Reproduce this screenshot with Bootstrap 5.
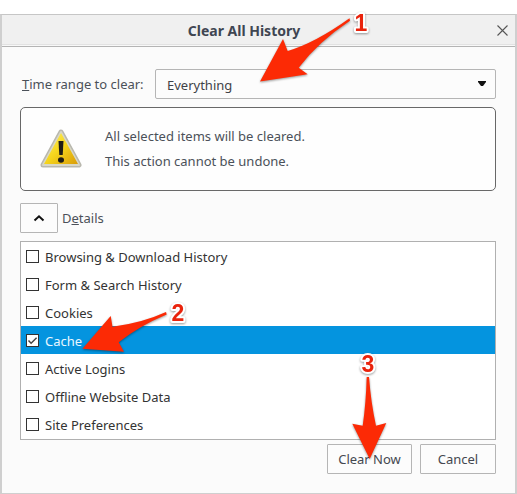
<!DOCTYPE html>
<html lang="en">
<head>
<meta charset="utf-8">
<meta name="viewport" content="width=device-width, initial-scale=1">
<title>Clear All History</title>
<link href="https://cdn.jsdelivr.net/npm/bootstrap@5.3.0/dist/css/bootstrap.min.css" rel="stylesheet">
<style>
body { font-family: "Noto Sans", sans-serif; font-size: 13px; line-height: 20px; color: #4b5159; background: #fff; }
.window { margin-top: 14px; background: #fbfbfb; border: 1px solid #c6c6c6; border-left: 2px solid #cfcfcf; border-right: 2px solid #cfcfcf; border-bottom: 2px solid #cfcfcf; }
.titlebar { height: 32px; padding-right: 29px; background: #f0f0f0; border-bottom: 1px solid #b4b4b4; box-shadow: inset 0 -1px #f8f8f8, inset 0 -2px #e2e2e2; }
.titlebar h1 { font-size: 14px; line-height: 20px; color: #3f4652; }
.close-btn { right: 6px; top: 9px; width: 13px; height: 13px; line-height: 0; }
.content-area { padding: 22px 19px 19px 18px; }
.range-label { width: 135px; padding-left: 2px; }
.range-select { height: 30px; padding: 2px 24px 0 11px; font-size: 13px; color: #3f4248; appearance: none; background: #fcfcfc; border: 1px solid #b5b5b5; border-radius: 2px; }
.range-caret { right: 10px; top: 12px; width: 8px; height: 5px; pointer-events: none; }
.notice { margin-top: 8px; height: 84px; padding-left: 17px; background: #fefefe; border: 1px solid #686868; border-radius: 5px; }
.notice-text { margin-left: 21px; line-height: 25px; }
.dialog-btn { height: 30px; padding: 0; font-size: 13px; color: #444850; background: #fcfcfc; border: 1px solid #b5b5b5; border-radius: 1px; }
.toggle-btn { width: 38px; line-height: 0; }
.details-row { margin-top: 12px; gap: 4px; }
.items { margin-top: 8px; padding-bottom: 1px; background: #fff; border: 1px solid #b0b0b0; }
.item-row { height: 28px; padding: 1px 0 0 5px; gap: 6px; color: #333; }
.item-row.selected { background: #0494df; color: #e9f7ff; }
.item-check { appearance: none; width: 13px; height: 13px; margin: 0; background: #fff center / 11px 11px no-repeat; border: 1px solid #333; }
.item-check:checked { background-image: url("data:image/svg+xml,%3Csvg xmlns='http://www.w3.org/2000/svg' viewBox='0 0 11 11'%3E%3Cpath d='M1.5 5.5l2.6 2.7L9.6 2.7' fill='none' stroke='%23444' stroke-width='1.5'/%3E%3C/svg%3E"); }
.actions { margin-top: 4px; gap: 8px; }
.clear-btn { width: 85px; }
.cancel-btn { width: 76px; }
.note { pointer-events: none; overflow: visible; filter: drop-shadow(0 1px 1px rgba(0,0,0,.4)); z-index: 5; }
.note path { fill: #fc2a05; }
.note text { font: bold 23px "Liberation Sans", sans-serif; fill: #e9230c; stroke: #fff; stroke-width: 4px; stroke-linejoin: round; paint-order: stroke; text-anchor: middle; }
.note-range { left: 104px; top: -62px; width: 114px; height: 76px; }
.note-cache { left: 61px; top: -30px; width: 106px; height: 48px; }
.note-clear { left: 24px; top: -90px; width: 40px; height: 108px; }
</style>
<script defer src="https://cdn.jsdelivr.net/npm/bootstrap@5.3.0/dist/js/bootstrap.bundle.min.js"></script>
</head>
<body>
<main class="window" role="dialog" aria-labelledby="title">
  <header class="titlebar d-flex align-items-center justify-content-center position-relative">
    <h1 id="title" class="fw-bold mb-0">Clear All History</h1>
    <button type="button" class="close-btn btn border-0 p-0 position-absolute" aria-label="Close">
      <svg width="13" height="13" viewBox="0 0 13 13"><path d="M1.500 1.500l10 10M11.500 1.500l-10 10" stroke="#555" stroke-width="1.100"/></svg>
    </button>
  </header>
  <div class="content-area">
    <div class="d-flex align-items-center">
      <label class="range-label flex-shrink-0" for="range"><u>T</u>ime range to clear:</label>
      <div class="position-relative flex-grow-1">
        <select id="range" class="range-select w-100 d-block"><option>Everything</option></select>
        <svg class="range-caret position-absolute" viewBox="0 0 8 5"><path d="M0 0h8v1L5 5H3L0 1z" fill="#111"/></svg>
        <svg class="note note-range position-absolute" viewBox="259 7 114 76"><path d="M349.5 18.3L350 20.7Q318 42 298.7 67.7L307.7 74.3L260 81.5L283 39L287.7 51Q315 43 349.5 18.3z"/><text x="361" y="31">1</text></svg>
      </div>
    </div>
    <section class="notice d-flex align-items-center">
      <svg class="flex-shrink-0" width="46" height="42" viewBox="0 0 46 42">
        <defs><linearGradient id="sign" x1="0" y1="0" x2="1" y2="1"><stop offset="0" stop-color="#fff36a"/><stop offset=".5" stop-color="#f5d51c"/><stop offset="1" stop-color="#d99c08"/></linearGradient></defs>
        <path d="M23 4L41 37H5z" fill="#c5c2b5" stroke="#b9b8ae" stroke-width="5" stroke-linejoin="round"/>
        <path d="M23 4L41 37H5z" fill="url(#sign)" stroke="#d8d7c8" stroke-width="2" stroke-linejoin="round"/>
        <path d="M23 5L40 36H6z" fill="url(#sign)"/>
        <path d="M20.5 13h5l-.8 14h-3.400z" fill="#1e1c16"/><ellipse cx="23" cy="32" rx="3" ry="2.700" fill="#1e1c16"/>
      </svg>
      <div class="notice-text"><div>All selected items will be cleared.</div><div>This action cannot be undone.</div></div>
    </section>
    <div class="details-row d-flex align-items-center">
      <button id="details" type="button" class="dialog-btn toggle-btn" aria-expanded="true" aria-controls="items" aria-label="Details">
        <svg width="12" height="8" viewBox="0 0 12 8"><path d="M1.500 6.500L6 2.300l4.500 4.200" fill="none" stroke="#111" stroke-width="2"/></svg>
      </button>
      <label for="details">D<u>e</u>tails</label>
    </div>
    <div id="items" class="items">
      <label class="item-row d-flex align-items-center"><input class="item-check" type="checkbox">Browsing &amp; Download History</label>
      <label class="item-row d-flex align-items-center"><input class="item-check" type="checkbox">Form &amp; Search History</label>
      <label class="item-row d-flex align-items-center"><input class="item-check" type="checkbox">Cookies</label>
      <div class="position-relative">
        <label class="item-row selected d-flex align-items-center"><input class="item-check" type="checkbox" checked>Cache</label>
        <svg class="note note-cache position-absolute" viewBox="82 296 106 48"><path d="M166 312L166.700 314.500Q139 326 118.700 342.300L124 351.700L82.500 348.700L110.700 316L112.500 326.700Q142 323 166 312z"/><text x="178" y="321">2</text></svg>
      </div>
      <label class="item-row d-flex align-items-center"><input class="item-check" type="checkbox">Active Logins</label>
      <label class="item-row d-flex align-items-center"><input class="item-check" type="checkbox">Offline Website Data</label>
      <label class="item-row d-flex align-items-center"><input class="item-check" type="checkbox">Site Preferences</label>
    </div>
    <div class="actions d-flex justify-content-end">
      <div class="position-relative">
        <button type="button" class="dialog-btn clear-btn">Clear Now</button>
        <svg class="note note-clear position-absolute" viewBox="351 354 40 108"><path d="M366.700 377H369Q371 403 376 425.700L386.300 423L369.700 459L352.300 423.700L362.700 425.700Q366 403 366.700 377z"/><text x="368" y="372">3</text></svg>
      </div>
      <button type="button" class="dialog-btn cancel-btn">Cancel</button>
    </div>
  </div>
</main>
</body>
</html>
